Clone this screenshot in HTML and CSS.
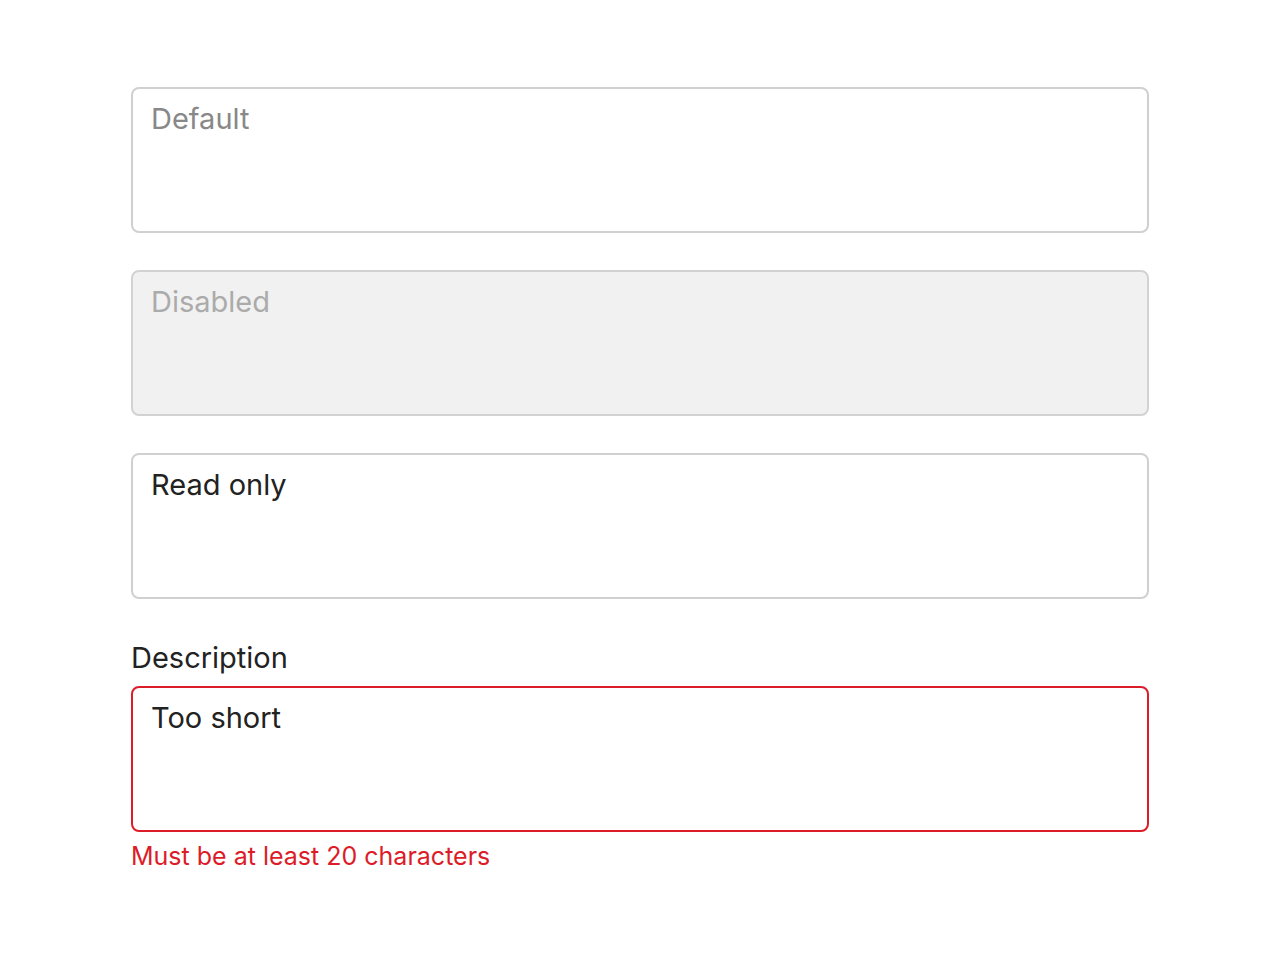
FILE: index.html
```html
<!DOCTYPE html>
<html lang="en">
<head>
  <meta charset="UTF-8">
  <meta name="viewport" content="width=device-width, initial-scale=1.0">
  <title>Textarea States</title>
  <link rel="stylesheet" href="styles.css">
</head>
<body>
  <div class="form">
    <textarea class="field" placeholder="Default"></textarea>
    <textarea class="field" placeholder="Disabled" disabled></textarea>
    <textarea class="field" readonly>Read only</textarea>
    <div class="group">
      <label class="label" for="desc">Description</label>
      <textarea class="field invalid" id="desc">Too short</textarea>
      <p class="error">Must be at least 20 characters</p>
    </div>
  </div>
</body>
</html>
```

FILE: styles.css
```css
/* General */
body {
  margin: 0;
  background: #fff;
  font-family: 'Inter', 'Noto Sans', sans-serif;
  color: #222;
}

.form {
  display: flex;
  flex-direction: column;
  gap: 37px;
  width: 1018px;
  margin: 87px 0 0 131px;
}

/* Textarea */
.field {
  display: block;
  box-sizing: border-box;
  width: 100%;
  height: 146px;
  margin: 0;
  padding: 12px 18px;
  border: 2px solid #d0d0d0;
  border-radius: 8px;
  background: #fff;
  font-family: inherit;
  font-size: 29px;
  line-height: 36px;
  color: #222;
  resize: none;
  outline: none;
}

.field::placeholder {
  color: #888;
}

.field:disabled {
  background: #f1f1f1;
  border-color: #d2d2d2;
}

.field:disabled::placeholder {
  color: #ababab;
}

.field.invalid {
  border-color: #dc1c28;
}

/* Label & error */
.group {
  display: flex;
  flex-direction: column;
  margin-top: 4px;
}

.label {
  font-size: 29px;
  line-height: 36px;
  margin: 0 0 10px;
  color: #222;
}

.error {
  margin: 8px 0 0;
  font-size: 25px;
  line-height: 32px;
  color: #dc1c28;
}
```
